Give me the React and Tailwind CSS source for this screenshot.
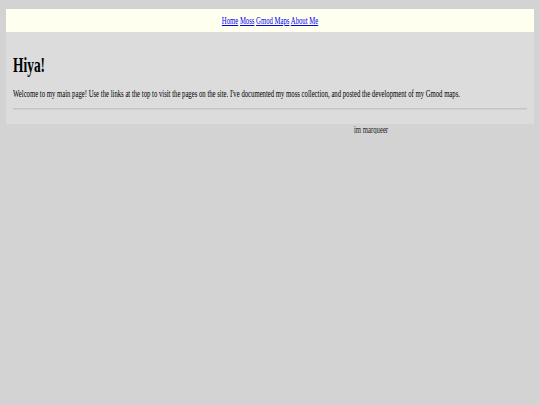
export default function App() {
  const serif = { fontFamily: '"Liberation Serif", "Times New Roman", serif' };
  return (
    <div className="min-h-[405px] w-full bg-[#d3d3d3] pt-[9px]" style={serif}>
      <div className="mx-[6px] bg-[#dcdcdc]">
        <nav className="flex h-[23px] items-center justify-center bg-[#fffff0]">
          <span className="inline-block origin-center scale-x-[0.61] whitespace-nowrap text-[11px] leading-none text-[#0000ee]">
            <a href="#" className="underline">Home</a>{' '}
            <a href="#" className="underline">Moss</a>{' '}
            <a href="#" className="underline">Gmod Maps</a>{' '}
            <a href="#" className="underline">About Me</a>
          </span>
        </nav>
        <div className="px-[7px] pb-[14px] pt-[22px]">
          <h1 className="origin-left scale-x-[0.61] whitespace-nowrap text-[22px] font-bold leading-[22px] text-black">
            Hiya!
          </h1>
          <p className="mt-[11px] origin-left scale-x-[0.61] whitespace-nowrap text-[11px] leading-[12px] text-black">
            Welcome to my main page! Use the links at the top to visit the pages on the site. I've documented my moss collection, and posted the development of my Gmod maps.
          </p>
          <div className="mt-[9px] h-[2px] border-t border-[#c4c4c4] bg-[#d0d0d0]"></div>
        </div>
      </div>
      <div className="overflow-hidden text-[11px] leading-[10px]">
        <span className="ml-[354px] inline-block origin-left scale-x-[0.61] whitespace-nowrap text-[#222]">
          im marqueer
        </span>
      </div>
    </div>
  );
}
